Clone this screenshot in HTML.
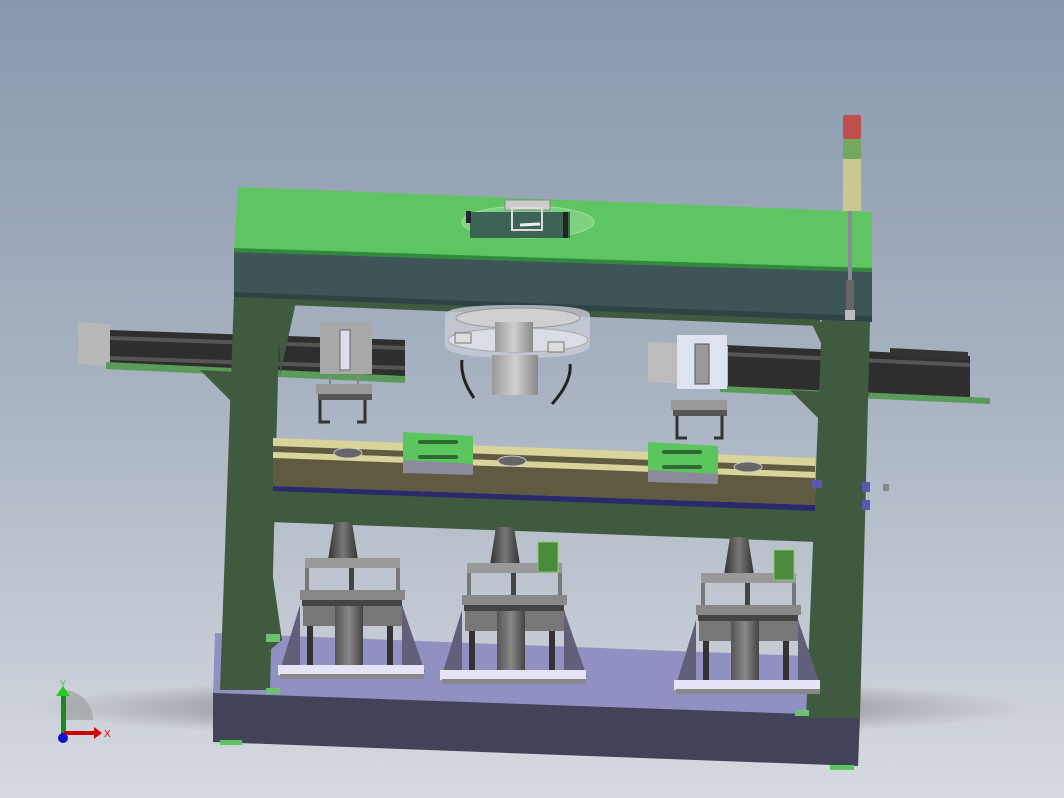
<!DOCTYPE html>
<html><head><meta charset="utf-8"><style>
html,body{margin:0;padding:0;width:1064px;height:798px;overflow:hidden}
svg{display:block}
text{font-family:"Liberation Sans",sans-serif}
</style></head><body>
<svg width="1064" height="798" viewBox="0 0 1064 798" xmlns="http://www.w3.org/2000/svg">
<defs>
<linearGradient id="bg" x1="0" y1="0" x2="0" y2="1">
<stop offset="0" stop-color="#8898ad"/><stop offset="0.5" stop-color="#a9b3c2"/><stop offset="1" stop-color="#d6dae0"/>
</linearGradient>
<radialGradient id="sh" cx="0.5" cy="0.5" r="0.5">
<stop offset="0" stop-color="#333" stop-opacity="0.75"/><stop offset="0.6" stop-color="#444" stop-opacity="0.4"/><stop offset="1" stop-color="#555" stop-opacity="0"/>
</radialGradient>
<linearGradient id="cyl" x1="0" x2="1"><stop offset="0" stop-color="#555"/><stop offset="0.5" stop-color="#888"/><stop offset="1" stop-color="#444"/></linearGradient>
<linearGradient id="cone" x1="0" x2="1"><stop offset="0" stop-color="#333"/><stop offset="0.5" stop-color="#777"/><stop offset="1" stop-color="#333"/></linearGradient>
<linearGradient id="cyl2" x1="0" x2="1"><stop offset="0" stop-color="#9a9a9a"/><stop offset="0.5" stop-color="#d0d0d0"/><stop offset="1" stop-color="#8a8a8a"/></linearGradient>
</defs>
<rect width="1064" height="798" fill="url(#bg)"/>
<!-- shadow -->
<ellipse cx="530" cy="708" rx="500" ry="30" fill="url(#sh)" opacity="0.8"/>

<!-- left linear rail -->
<polygon points="108,330 405,340 405,382 108,368" fill="#2e2e2e"/>
<polygon points="108,336 405,346 405,350 108,340" fill="#555"/>
<polygon points="108,356 405,366 405,370 108,360" fill="#555"/>
<polygon points="78,322 110,324 110,366 78,364" fill="#b8b8b8"/>
<polygon points="106,362 405,376 405,383 106,369" fill="#5a9a5a"/>
<polygon points="200,370 235,372 235,405" fill="#3f5a3f"/>
<!-- right linear rail -->
<polygon points="725,345 970,356 970,398 725,388" fill="#2e2e2e"/>
<polygon points="725,352 970,363 970,367 725,356" fill="#555"/>
<polygon points="890,348 968,352 968,360 890,356" fill="#333"/>
<polygon points="648,342 728,346 728,386 648,382" fill="#bdbdbd"/>
<polygon points="720,386 990,398 990,404 720,392" fill="#5a9a5a"/>
<polygon points="790,390 870,394 830,430" fill="#3f5a3f"/>

<!-- base -->
<polygon points="215,633 857,658 860,718 213,695" fill="#9090c2"/>
<polygon points="213,693 860,716 858,766 213,742" fill="#424258"/>
<rect x="220" y="740" width="22" height="5" fill="#5fc562"/>
<rect x="830" y="765" width="24" height="5" fill="#5fc562"/>

<!-- left pillar -->
<polygon points="234,295 280,298 270,690 220,690" fill="#3f5a3f"/>
<polygon points="278,300 296,302 280,375" fill="#3f5a3f"/>
<polygon points="272,570 282,640 270,650" fill="#3f5a3f"/>
<!-- right pillar -->
<polygon points="822,320 870,322 860,718 806,718" fill="#3f5a3f"/>
<polygon points="810,320 824,322 822,345" fill="#3f5a3f"/>
<polygon points="815,620 810,690 800,690" fill="#3f5a3f"/>
<rect x="266" y="634" width="14" height="8" fill="#6fc070"/>
<rect x="266" y="688" width="14" height="6" fill="#6fc070"/>
<rect x="795" y="710" width="14" height="6" fill="#6fc070"/>

<!-- top beam -->
<polygon points="238,187 872,212 872,270 234,250" fill="#5fc562"/>
<polygon points="234,248 872,268 872,272 234,252" fill="#2f8a3a"/>
<polygon points="234,252 872,272 872,322 234,297" fill="#3d5556"/>
<polygon points="234,292 872,316 872,322 234,298" fill="#2e4444"/>
<polygon points="234,297 820,320 820,326 234,303" fill="#3f5a3f"/>
<!-- top mechanism -->
<ellipse cx="528" cy="222" rx="66" ry="16" fill="#7fd080" stroke="#9fe0a0" stroke-width="1"/>
<rect x="470" y="212" width="100" height="26" fill="#3c6454"/>
<rect x="466" y="211" width="5" height="12" fill="#223"/>
<rect x="563" y="212" width="5" height="26" fill="#222"/>
<rect x="505" y="200" width="45" height="10" fill="#ccc" stroke="#888"/>
<rect x="512" y="208" width="30" height="22" fill="none" stroke="#ddd" stroke-width="2"/>
<line x1="520" y1="225" x2="540" y2="224" stroke="#eee" stroke-width="3"/>

<!-- stack light -->
<rect x="843" y="115" width="18" height="24" fill="#c05050" rx="2"/>
<rect x="843" y="139" width="18" height="20" fill="#74a860"/>
<rect x="843" y="159" width="18" height="52" fill="#c8c890"/>
<rect x="848" y="211" width="4" height="100" fill="#8a8a9a"/>
<rect x="846" y="280" width="8" height="30" fill="#666"/>
<rect x="845" y="310" width="10" height="10" fill="#bbb"/>

<!-- center gripper -->
<path d="M445,315 Q445,305 518,305 Q590,305 590,315 L590,345 Q590,358 518,358 Q445,358 445,345Z" fill="#c8ccd6" opacity="0.8"/>
<ellipse cx="518" cy="318" rx="62" ry="10" fill="#d0d0d0" stroke="#999"/>
<ellipse cx="518" cy="340" rx="70" ry="12" fill="#dadde4" stroke="#aaa"/>
<rect x="495" y="322" width="38" height="30" fill="url(#cyl2)"/>
<rect x="492" y="355" width="46" height="40" fill="url(#cyl2)"/>
<rect x="455" y="333" width="16" height="10" fill="#ddd" stroke="#777"/>
<rect x="548" y="342" width="16" height="10" fill="#ddd" stroke="#777"/>
<path d="M462,360 q-2,18 12,38" stroke="#222" stroke-width="3" fill="none"/>
<path d="M570,364 q2,18 -18,40" stroke="#222" stroke-width="3" fill="none"/>

<!-- left gripper module -->
<rect x="320" y="322" width="52" height="52" fill="#a8a8a8"/>
<rect x="340" y="330" width="10" height="40" fill="#dde" stroke="#666"/>
<rect x="316" y="384" width="56" height="10" fill="#999"/>
<rect x="318" y="394" width="54" height="6" fill="#555"/>
<path d="M320,400 v22 h10 M365,400 v22 h-8" stroke="#333" stroke-width="3" fill="none"/>
<line x1="330" y1="374" x2="330" y2="384" stroke="#888" stroke-width="2"/>
<line x1="358" y1="374" x2="358" y2="384" stroke="#888" stroke-width="2"/>
<!-- right gripper module -->
<rect x="677" y="335" width="50" height="54" fill="#dfe2f0"/>
<rect x="695" y="344" width="14" height="40" fill="#999" stroke="#555"/>
<rect x="671" y="400" width="56" height="10" fill="#999"/>
<rect x="673" y="410" width="54" height="6" fill="#555"/>
<path d="M677,416 v22 h10 M722,416 v22 h-8" stroke="#333" stroke-width="3" fill="none"/>

<!-- lower crossbar -->
<polygon points="270,488 818,508 818,542 270,522" fill="#3f5a3f"/>
<!-- rail -->
<polygon points="273,438 815,458 815,466 273,446" fill="#d8d49a"/>
<polygon points="273,446 815,466 815,472 273,452" fill="#5f5a40"/>
<polygon points="273,452 815,472 815,478 273,458" fill="#d8d49a"/>
<polygon points="273,458 815,478 815,505 273,486" fill="#5f5a40"/>
<polygon points="273,486 815,505 815,511 273,491" fill="#2a2a6a"/>
<rect x="812" y="480" width="10" height="8" fill="#5858b0"/>
<rect x="862" y="482" width="8" height="10" fill="#5858b0"/>
<rect x="862" y="500" width="8" height="10" fill="#5858b0"/>
<rect x="883" y="484" width="6" height="7" fill="#888"/>
<!-- pucks -->
<ellipse cx="348" cy="453" rx="14" ry="5" fill="#666" stroke="#ccc"/>
<ellipse cx="512" cy="461" rx="14" ry="5" fill="#666" stroke="#ccc"/>
<ellipse cx="748" cy="467" rx="14" ry="5" fill="#666" stroke="#ccc"/>
<!-- green fixtures -->
<polygon points="403,432 473,436 473,472 403,470" fill="#5bc55e"/>
<polygon points="403,460 473,464 473,475 403,473" fill="#8a8a9a"/>
<rect x="418" y="440" width="40" height="4" rx="2" fill="#2f6a30"/>
<rect x="418" y="455" width="40" height="4" rx="2" fill="#2f6a30"/>
<polygon points="648,442 718,446 718,482 648,480" fill="#5bc55e"/>
<polygon points="648,470 718,474 718,484 648,482" fill="#8a8a9a"/>
<rect x="662" y="450" width="40" height="4" rx="2" fill="#2f6a30"/>
<rect x="662" y="465" width="40" height="4" rx="2" fill="#2f6a30"/>

<!-- stations -->
<g id="st">
<polygon points="334,522 352,522 358,560 328,560" fill="url(#cone)"/>
<rect x="305" y="558" width="95" height="10" fill="#999"/>
<rect x="305" y="568" width="4" height="30" fill="#777"/><rect x="396" y="568" width="4" height="30" fill="#777"/>
<rect x="349" y="568" width="5" height="28" fill="#444"/>
<rect x="300" y="590" width="105" height="10" fill="#888"/>
<rect x="302" y="600" width="100" height="6" fill="#444"/>
<rect x="303" y="606" width="100" height="20" fill="#777"/>
<rect x="335" y="606" width="28" height="60" fill="url(#cyl)"/>
<rect x="307" y="626" width="6" height="42" fill="#333"/><rect x="387" y="626" width="6" height="42" fill="#333"/>
<polygon points="300,605 280,670 300,670" fill="#60607a"/>
<polygon points="402,605 425,672 402,672" fill="#60607a"/>
<rect x="278" y="665" width="146" height="10" fill="#e4e4f4"/>
<rect x="280" y="674" width="144" height="5" fill="#888"/>
</g>
<use href="#st" transform="translate(162,5)"/>
<use href="#st" transform="translate(396,15)"/>
<rect x="538" y="542" width="20" height="30" fill="#4a8a3a" stroke="#8c6" />
<rect x="774" y="550" width="20" height="30" fill="#4a8a3a" stroke="#8c6"/>

<!-- axis triad -->
<path d="M63,690 A30,30 0 0 1 93,720 L63,720Z" fill="#999" opacity="0.6"/>
<rect x="61" y="694" width="5" height="40" fill="#1a8a1a"/>
<polygon points="56,696 63,686 70,696" fill="#2c2"/>
<rect x="64" y="731" width="30" height="4" fill="#c00"/>
<polygon points="94,727 102,733 94,739" fill="#d00"/>
<circle cx="63" cy="738" r="5" fill="#11c"/>
<text x="60" y="687" font-size="9" fill="#2c2">Y</text>
<text x="104" y="737" font-size="10" fill="#e00">X</text>
</svg>
</body></html>
